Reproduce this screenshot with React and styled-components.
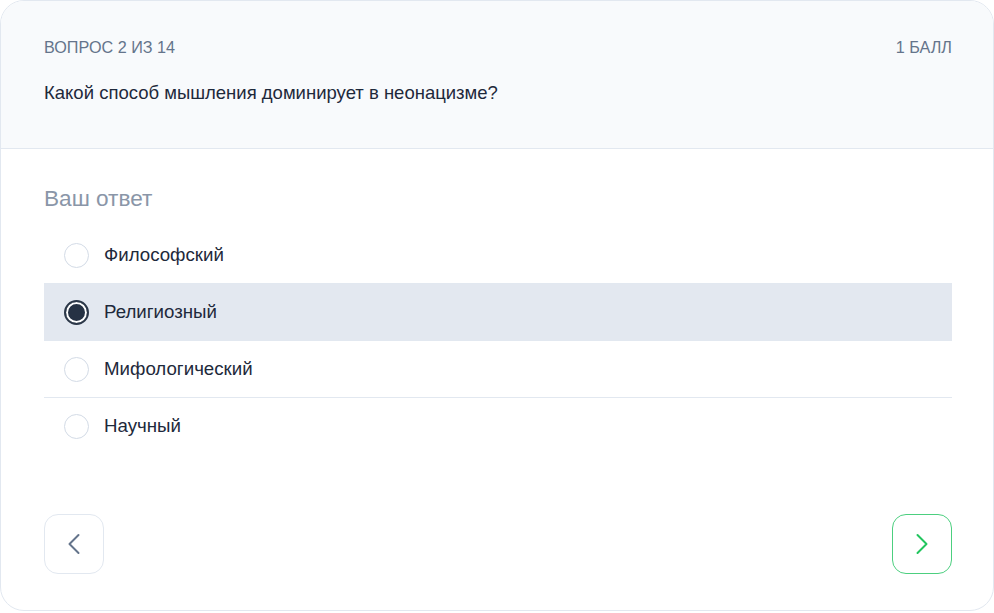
import React, { useState } from "react";
import styled, { createGlobalStyle } from "styled-components";

const Global = createGlobalStyle`
  html, body { margin: 0; padding: 0; background: #ffffff; }
  body { font-family: "Liberation Sans", Arial, sans-serif; }
  * { box-sizing: border-box; }
`;

const Card = styled.div`
  width: 994px;
  height: 611px;
  border: 1px solid #e2e8f0;
  border-radius: 24px;
  overflow: hidden;
  background: #ffffff;
  display: flex;
  flex-direction: column;
`;

const Header = styled.div`
  background: #f8fafc;
  border-bottom: 1px solid #e2e8f0;
  padding: 36px 41px 43px 43px;
  display: flex;
  flex-direction: column;
  gap: 23px;
`;

const MetaRow = styled.div`
  display: flex;
  justify-content: space-between;
  align-items: center;
  font-size: 16.2px;
  line-height: 20px;
  color: #64748b;
  text-transform: uppercase;
`;

const Question = styled.div`
  font-size: 18.5px;
  line-height: 25px;
  color: #1e293b;
`;

const Body = styled.div`
  flex: 1;
  padding: 36px 41px 36px 43px;
  display: flex;
  flex-direction: column;
`;

const AnswerTitle = styled.div`
  font-size: 22.6px;
  line-height: 28px;
  color: #8a96a8;
  margin-bottom: 13px;
`;

const Options = styled.div`
  display: flex;
  flex-direction: column;
`;

const Option = styled.label`
  height: 57px;
  display: flex;
  align-items: center;
  gap: 15px;
  padding: 0 20px;
  cursor: pointer;
  background: ${(p) => (p.$selected ? "#e3e8f0" : "transparent")};
  border-top: 1px solid ${(p) => (p.$first ? "transparent" : "#e2e8f0")};
  font-size: 18.7px;
  color: #1e293b;
`;

const Radio = styled.span`
  width: 25px;
  height: 25px;
  border-radius: 50%;
  flex: none;
  background: #ffffff;
  border: ${(p) => (p.$checked ? "2px solid #2b3748" : "1px solid #d3dbe6")};
  box-shadow: ${(p) => (p.$checked ? "inset 0 0 0 2px #ffffff, inset 0 0 0 20px #263244" : "none")};
`;

const Footer = styled.div`
  margin-top: auto;
  display: flex;
  justify-content: space-between;
`;

const NavButton = styled.button`
  width: 60px;
  height: 60px;
  border-radius: 14px;
  background: #ffffff;
  border: 1px solid ${(p) => (p.$accent ? "#4ccf7f" : "#e2e8f0")};
  color: ${(p) => (p.$accent ? "#22c55e" : "#64748b")};
  display: flex;
  align-items: center;
  justify-content: center;
  padding: 0;
  cursor: pointer;
`;

const Chevron = ({ dir }) => (
  <svg width="16" height="24" viewBox="0 0 16 24" fill="none" stroke="currentColor" strokeWidth="2" strokeLinecap="round" strokeLinejoin="round">
    {dir === "left" ? <path d="M12.5 3l-9 9 9 9" /> : <path d="M3.5 3l9 9-9 9" />}
  </svg>
);

const options = ["Философский", "Религиозный", "Мифологический", "Научный"];

export default function App() {
  const [sel, setSel] = useState(1);
  return (
    <>
      <Global />
      <Card>
        <Header>
          <MetaRow>
            <span>Вопрос 2 из 14</span>
            <span>1 балл</span>
          </MetaRow>
          <Question>Какой способ мышления доминирует в неонацизме?</Question>
        </Header>
        <Body>
          <AnswerTitle>Ваш ответ</AnswerTitle>
          <Options>
            {options.map((o, i) => (
              <Option key={o} $first={i === 0} $selected={sel === i} onClick={() => setSel(i)}>
                <Radio $checked={sel === i} />
                {o}
              </Option>
            ))}
          </Options>
          <Footer>
            <NavButton aria-label="Назад"><Chevron dir="left" /></NavButton>
            <NavButton $accent aria-label="Далее"><Chevron dir="right" /></NavButton>
          </Footer>
        </Body>
      </Card>
    </>
  );
}
